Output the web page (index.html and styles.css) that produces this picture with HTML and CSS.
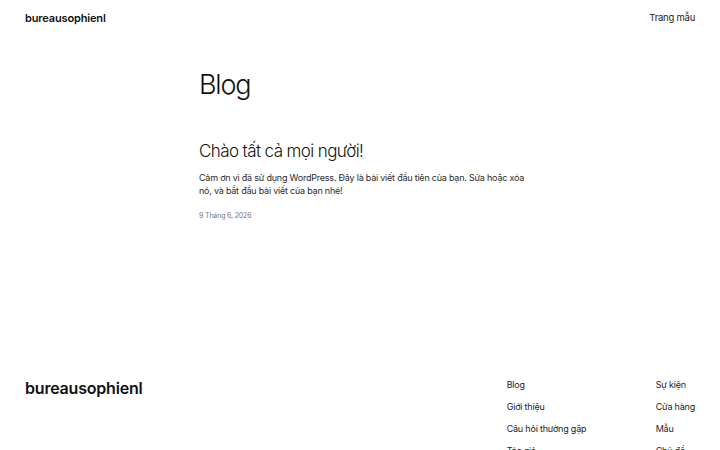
FILE: index.html
```html
<!DOCTYPE html>
<html lang="vi">
<head>
<meta charset="utf-8">
<title>Blog – bureausophienl</title>
<link rel="stylesheet" href="styles.css">
</head>
<body>
<header class="site-header">
  <a class="site-title" href="#">bureausophienl</a>
  <nav class="header-nav"><a href="#">Trang mẫu</a></nav>
</header>
<main class="main">
  <h1 class="page-title">Blog</h1>
  <article class="post">
    <h2 class="post-title">Chào tất cả mọi người!</h2>
    <p class="post-excerpt">Cảm ơn vì đã sử dụng WordPress. Đây là bài viết đầu tiên của bạn. Sửa hoặc xóa nó, và bắt đầu bài viết của bạn nhé!</p>
    <time class="post-date">9 Tháng 6, 2026</time>
  </article>
</main>
<footer class="site-footer">
  <div class="footer-brand">bureausophienl</div>
  <div class="footer-cols">
    <ul class="footer-col">
      <li><a href="#">Blog</a></li>
      <li><a href="#">Giới thiệu</a></li>
      <li><a href="#">Câu hỏi thường gặp</a></li>
      <li><a href="#">Tác giả</a></li>
    </ul>
    <ul class="footer-col">
      <li><a href="#">Sự kiện</a></li>
      <li><a href="#">Cửa hàng</a></li>
      <li><a href="#">Mẫu</a></li>
      <li><a href="#">Chủ đề</a></li>
    </ul>
  </div>
</footer>
</body>
</html>
```
FILE: styles.css
```css
* { box-sizing: border-box; }
html, body { margin: 0; padding: 0; }
body {
  background: #fff;
  color: #111;
  font-family: Inter, "Noto Sans", sans-serif;
  width: 720px;
  height: 450px;
  overflow: hidden;
}
a { color: inherit; text-decoration: none; }

.site-header {
  display: flex;
  justify-content: space-between;
  align-items: center;
  height: 35px;
  padding: 0 25px;
}
.site-title {
  font-size: 11px;
  font-weight: 600;
  letter-spacing: -0.15px;
}
.header-nav {
  font-size: 9.5px;
  letter-spacing: -0.25px;
  color: #222;
}

.main {
  width: 330px;
  margin-left: 199px;
  padding-top: 32px;
}
.page-title {
  margin: 0;
  font-size: 27px;
  font-weight: 300;
  letter-spacing: -1.2px;
  line-height: 36px;
}
.post { margin-top: 36px; }
.post-title {
  margin: 0;
  font-size: 17px;
  font-weight: 300;
  letter-spacing: -0.6px;
  line-height: 24px;
}
.post-excerpt {
  margin: 8px 0 0;
  font-size: 9px;
  line-height: 13px;
  letter-spacing: -0.22px;
  color: #2a2a2a;
}
.post-date {
  display: block;
  margin-top: 14px;
  font-size: 7px;
  letter-spacing: -0.15px;
  color: #777;
}

.site-footer {
  display: flex;
  justify-content: space-between;
  padding: 159px 25px 0;
}
.footer-brand {
  font-size: 16px;
  font-weight: 600;
  letter-spacing: -0.2px;
  line-height: 20px;
  margin-top: -1px;
}
.footer-cols {
  display: flex;
  gap: 0;
}
.footer-col {
  list-style: none;
  margin: 0;
  padding: 0;
  width: 149px;
  white-space: nowrap;
}
.footer-col:last-child { width: auto; }
.footer-col li {
  font-size: 9px;
  line-height: 12px;
  margin-bottom: 10px;
  letter-spacing: -0.2px;
  color: #222;
}
```
